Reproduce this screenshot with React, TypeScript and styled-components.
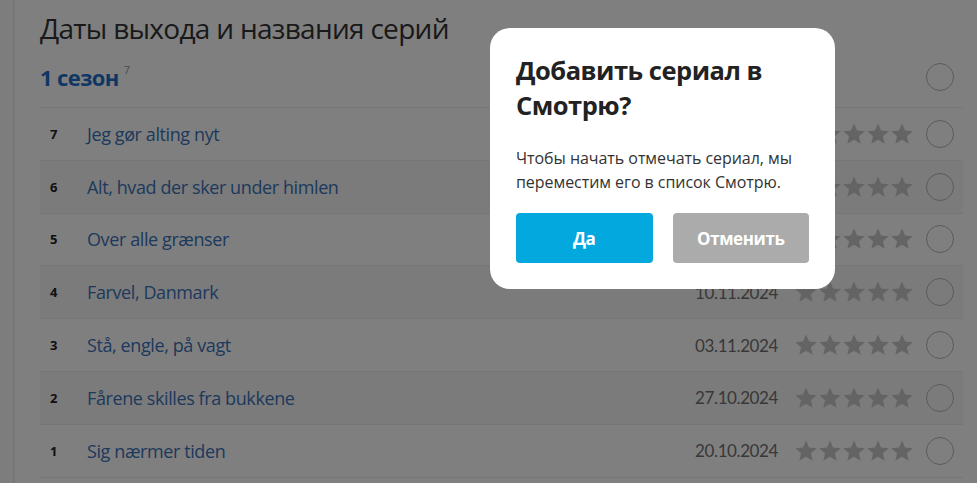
import React from 'react';
import styled, { createGlobalStyle } from 'styled-components';

const Global = createGlobalStyle`
  html, body { margin: 0; padding: 0; background: #fafafa; }
  body { font-family: "Noto Sans", sans-serif; overflow: hidden; }
  * { box-sizing: border-box; }
`;

const Page = styled.div`
  display: flex;
  height: 483px;
`;

const Side = styled.div`
  width: 15px;
  flex: none;
  background: #fafafa;
  border-right: 2px solid #eeeeee;
`;

const Main = styled.main`
  flex: 1;
  background: #fff;
  padding: 10px 14px 0 25px;
  overflow: hidden;
`;

const Title = styled.h1`
  margin: 0;
  font-family: "Open Sans", sans-serif;
  font-weight: 400;
  font-size: 28px;
  line-height: 36px;
  color: #333;
  letter-spacing: -0.7px;
`;

const SeasonHead = styled.div`
  display: flex;
  align-items: center;
  justify-content: space-between;
  height: 62px;
  padding-right: 9px;
  border-bottom: 1px solid #ececec;
`;

const SeasonName = styled.h2`
  margin: 0;
  font-family: "Open Sans", sans-serif;
  font-weight: 700;
  font-size: 22px;
  color: #1f6fc9;
  letter-spacing: -0.6px;
  sup {
    font-size: 11px;
    font-weight: 400;
    color: #999;
    margin-left: 5px;
    vertical-align: 12px;
  }
`;

const Circle = styled.span`
  display: block;
  width: 28px;
  height: 28px;
  border-radius: 50%;
  border: 1px solid #b5b5b5;
  flex: none;
`;

const Row = styled.div<{ $alt: boolean }>`
  display: grid;
  grid-template-columns: 37px 1fr auto auto auto;
  align-items: center;
  height: 52.8px;
  padding-left: 10px;
  padding-right: 9px;
  border-bottom: 1px solid #ececec;
  background: ${(p) => (p.$alt ? '#f7f7f7' : '#fff')};
`;

const Num = styled.span`
  font-family: "Open Sans", sans-serif;
  font-weight: 700;
  font-size: 13px;
  color: #222;
`;

const EpTitle = styled.a`
  font-family: "Open Sans", sans-serif;
  font-size: 18px;
  letter-spacing: -0.4px;
  color: #3b73b9;
  text-decoration: none;
`;

const Date = styled.span`
  font-family: Lato, sans-serif;
  font-size: 17px;
  letter-spacing: -0.4px;
  color: #707070;
  margin-right: 16px;
`;

const Stars = styled.div`
  display: flex;
  margin-right: 12px;
`;

const Star = () => (
  <svg width="24" height="24" viewBox="0 0 24 24">
    <path
      d="M12 1.5l3.1 7.1 7.6.6-5.8 5 1.8 7.5L12 17.7l-6.7 4 1.8-7.5-5.8-5 7.6-.6z"
      fill="#c8c8c8"
    />
  </svg>
);

const Overlay = styled.div`
  position: fixed;
  inset: 0;
  background: rgba(0, 0, 0, 0.5);
`;

const Modal = styled.div`
  position: absolute;
  left: 490px;
  top: 28px;
  width: 345px;
  background: #fff;
  border-radius: 20px;
  padding: 25px 26px 26px 26px;
`;

const ModalTitle = styled.h3`
  margin: 0;
  font-family: "Open Sans", sans-serif;
  font-weight: 700;
  font-size: 25.5px;
  line-height: 35px;
  color: #222;
  letter-spacing: -0.5px;
`;

const ModalText = styled.p`
  margin: 23px 0 0;
  font-family: "Open Sans", sans-serif;
  font-size: 16px;
  line-height: 24px;
  color: #333;
  letter-spacing: -0.05px;
`;

const Buttons = styled.div`
  display: grid;
  grid-template-columns: 1fr 1fr;
  gap: 20px;
  margin-top: 19px;
`;

const Btn = styled.button<{ $primary?: boolean }>`
  height: 50px;
  border: none;
  border-radius: 4px;
  font-family: "Open Sans", sans-serif;
  font-weight: 700;
  font-size: 17px;
  letter-spacing: -0.4px;
  color: #fff;
  background: ${(p) => (p.$primary ? '#03a9de' : '#ababab')};
`;

const episodes = [
  { n: 7, t: 'Jeg gør alting nyt', d: '24.11.2024' },
  { n: 6, t: 'Alt, hvad der sker under himlen', d: '17.11.2024' },
  { n: 5, t: 'Over alle grænser', d: '17.11.2024' },
  { n: 4, t: 'Farvel, Danmark', d: '10.11.2024' },
  { n: 3, t: 'Stå, engle, på vagt', d: '03.11.2024' },
  { n: 2, t: 'Fårene skilles fra bukkene', d: '27.10.2024' },
  { n: 1, t: 'Sig nærmer tiden', d: '20.10.2024' },
];

export default function App() {
  return (
    <>
      <Global />
      <Page>
        <Side />
        <Main>
          <Title>Даты выхода и названия серий</Title>
          <SeasonHead>
            <SeasonName>
              1 сезон<sup>7</sup>
            </SeasonName>
            <Circle />
          </SeasonHead>
          {episodes.map((e, i) => (
            <Row key={e.n} $alt={i % 2 === 1}>
              <Num>{e.n}</Num>
              <EpTitle href="#">{e.t}</EpTitle>
              <Date>{e.d}</Date>
              <Stars>
                {[0, 1, 2, 3, 4].map((s) => (
                  <Star key={s} />
                ))}
              </Stars>
              <Circle />
            </Row>
          ))}
        </Main>
      </Page>
      <Overlay>
        <Modal>
          <ModalTitle>Добавить сериал в Смотрю?</ModalTitle>
          <ModalText>
            Чтобы начать отмечать сериал, мы переместим его в список Смотрю.
          </ModalText>
          <Buttons>
            <Btn $primary>Да</Btn>
            <Btn>Отменить</Btn>
          </Buttons>
        </Modal>
      </Overlay>
    </>
  );
}
